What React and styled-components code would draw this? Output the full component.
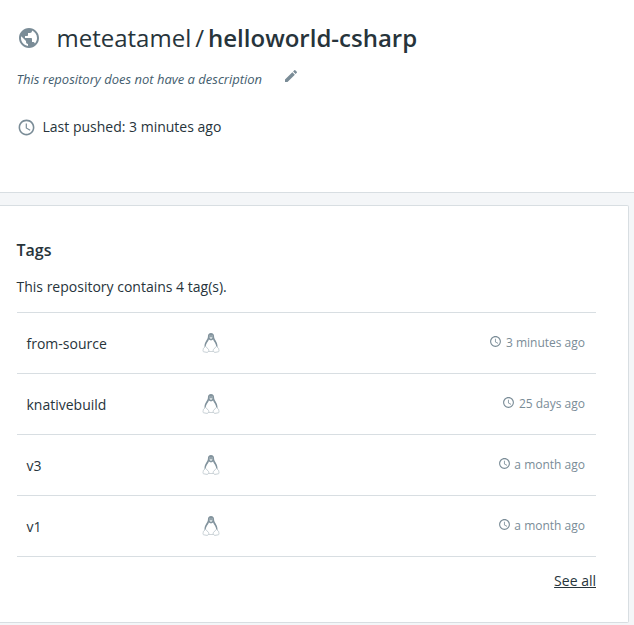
import React from "react";
import styled, { createGlobalStyle } from "styled-components";
import { MdPublic, MdEdit, MdAccessTime } from "react-icons/md";

const GlobalStyle = createGlobalStyle`
  * { box-sizing: border-box; }
  body {
    margin: 0;
    background: #f4f6f8;
    color: #27343b;
    font-family: "Open Sans", sans-serif;
    font-size: 14px;
    line-height: 20px;
    -webkit-font-smoothing: antialiased;
  }
`;

const Page = styled.div`
  height: 625px;
  overflow: hidden;
`;

const Header = styled.header`
  height: 193px;
  padding: 20px 17px 0 16.5px;
  background: #fff;
  border-bottom: 1px solid #d8dee2;
`;

const TitleRow = styled.div`
  display: flex;
  align-items: center;
  height: 36px;
`;

const GlobeIcon = styled(MdPublic)`
  width: 24px;
  height: 24px;
  margin-right: 16px;
  color: #7a8c97;
`;

const Title = styled.h1`
  display: flex;
  gap: 4px;
  margin: 0;
  font-size: 24px;
  font-weight: 400;
  line-height: 36px;
`;

const RepoName = styled.span`
  font-weight: 600;
`;

const DescriptionRow = styled.div`
  display: flex;
  height: 20px;
  margin-top: 12px;
`;

const Description = styled.em`
  width: 266px;
  padding-top: 1px;
  color: #445d6e;
  font-size: 13px;
`;

const EditIcon = styled(MdEdit)`
  width: 16px;
  height: 16px;
  color: #7a8c97;
`;

const PushedRow = styled.div`
  display: flex;
  align-items: center;
  gap: 7px;
  height: 20px;
  margin-top: 29px;
`;

const ClockIcon = styled(MdAccessTime)`
  width: ${(p) => p.$size}px;
  height: ${(p) => p.$size}px;
  color: #7a8c97;
`;

const Card = styled.section`
  width: 629px;
  height: 418px;
  margin-top: 12px;
  padding: 34px 32px 0 16.5px;
  background: #fff;
  border: 1px solid #d8dee2;
  border-left: 0;
  border-radius: 0 2px 2px 0;
`;

const CardTitle = styled.h2`
  margin: 0;
  font-size: 16px;
  font-weight: 600;
  line-height: 20px;
`;

const Summary = styled.p`
  margin: 17px 0 15px;
`;

const TagList = styled.ul`
  margin: 0;
  padding: 0;
  list-style: none;
  border-bottom: 1px solid #d8dee2;
`;

const TagRow = styled.li`
  display: grid;
  grid-template-columns: 175.5px 20px 1fr;
  align-items: center;
  height: 61px;
  padding: 1px 11px 0 10px;
  border-top: 1px solid #d8dee2;
`;

const PenguinIcon = styled.svg`
  width: 18px;
  height: 22px;
  margin-top: -2px;
`;

const Age = styled.span`
  display: flex;
  justify-content: flex-end;
  align-items: center;
  gap: 3.5px;
  margin-top: -2px;
  color: #7a8c97;
  font-size: 12px;

  svg { margin-top: -3px; }
`;

const Footer = styled.div`
  display: flex;
  justify-content: flex-end;
  padding-top: 14px;
`;

const SeeAll = styled.a`
  color: inherit;
  text-decoration: underline;
`;

const Penguin = () => (
  <PenguinIcon viewBox="0 0 18 22" aria-label="Linux">
    <path
      d="M5.9 4.8C5.9 2.2 7 1 9 1s3.1 1.2 3.1 3.8c0 2.6 3.4 5 3.4 9.2 0 3.5-2.6 5.5-6.5 5.5S2.5 17.5 2.5 14c0-4.2 3.4-6.6 3.4-9.2Z"
      fill="#82939d"
    />
    <path
      d="M6.8 7.4 9 8.6l2.2-1.2c.3 2.2 3 3.6 3 7.3 0 2.7-2.2 4.5-5.2 4.5s-5.2-1.8-5.2-4.5c0-3.7 2.7-5.1 3-7.3Z"
      fill="#fff"
    />
    <path d="M7.2 5.6 9 4.9l1.8.7L9 7.2Z" fill="#dfe5e8" />
    <path d="M7.5 4h.9M9.6 4h.9" stroke="#e9edef" strokeWidth=".9" />
    <path
      d="m3.5 14.2 3.1 3.4c.7 1-.1 2.7-1.6 2.8l-3.3-.6c-1-.3-.7-1.2-.5-2 .1-.9-.2-1.4.8-1.7.7-.3.7-1.6 1.5-1.9ZM14.5 14.2l-3.1 3.4c-.7 1 .1 2.7 1.6 2.8l3.3-.6c1-.3.7-1.2.5-2-.1-.9.2-1.4-.8-1.7-.7-.3-.7-1.6-1.5-1.9Z"
      fill="#fff"
      stroke="#b9c4ca"
      strokeWidth=".8"
    />
  </PenguinIcon>
);

const tags = [
  { name: "from-source", age: "3 minutes ago" },
  { name: "knativebuild", age: "25 days ago" },
  { name: "v3", age: "a month ago" },
  { name: "v1", age: "a month ago" },
];

export default function App() {
  return (
    <Page>
      <GlobalStyle />
      <Header>
        <TitleRow>
          <GlobeIcon />
          <Title>
            <span>meteatamel</span>
            <span>/</span>
            <RepoName>helloworld-csharp</RepoName>
          </Title>
        </TitleRow>
        <DescriptionRow>
          <Description>This repository does not have a description</Description>
          <EditIcon />
        </DescriptionRow>
        <PushedRow>
          <ClockIcon $size={19} />
          <span>Last pushed: 3 minutes ago</span>
        </PushedRow>
      </Header>
      <Card>
        <CardTitle>Tags</CardTitle>
        <Summary>This repository contains 4 tag(s).</Summary>
        <TagList>
          {tags.map((tag) => (
            <TagRow key={tag.name}>
              <span>{tag.name}</span>
              <Penguin />
              <Age>
                <ClockIcon $size={13} />
                {tag.age}
              </Age>
            </TagRow>
          ))}
        </TagList>
        <Footer>
          <SeeAll href="#tags">See all</SeeAll>
        </Footer>
      </Card>
    </Page>
  );
}
